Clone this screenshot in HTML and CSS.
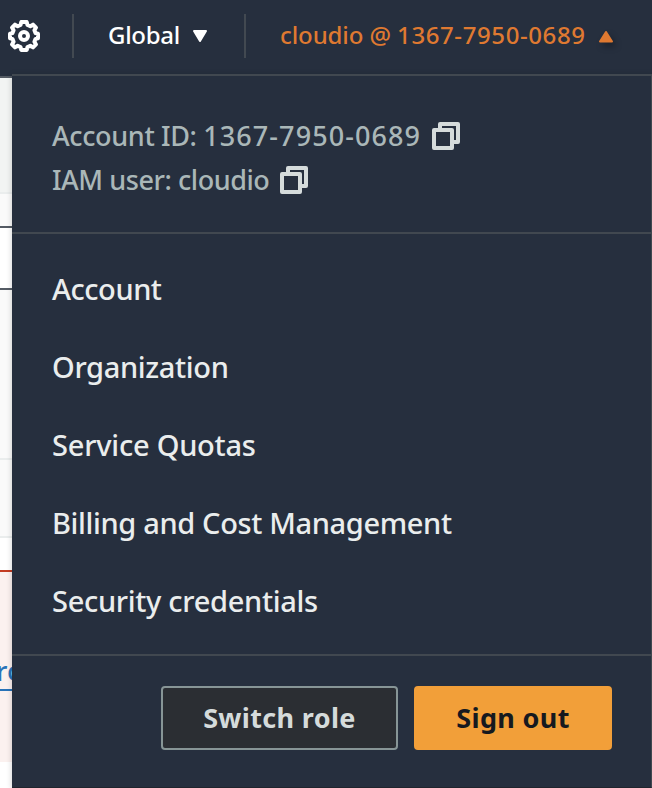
FILE: index.html
```html
<!DOCTYPE html>
<html lang="en">
<head>
<meta charset="utf-8">
<title>Account menu</title>
<link rel="stylesheet" href="styles.css">
</head>
<body>
<header class="topbar">
  <svg class="gear" viewBox="0 0 32 32" aria-hidden="true">
    <path d="M13.300 2h5.400l.8 3 2.800 1.200 2.700-1.600 3 3-1.600 2.700 1.200 2.800 2.400.6v4.600l-2.400.6-1.200 2.800 1.600 2.700-3 3-2.700-1.600-2.800 1.200-.8 3h-5.400l-.8-3-2.800-1.200L7 27.400l-3-3 1.600-2.700-1.200-2.800L2 18.300v-4.600l2.400-.6 1.200-2.800L4 7.600l3-3 2.700 1.600L12.500 5z"/>
    <circle cx="16" cy="16" r="4"/>
  </svg>
  <span class="divider"></span>
  <div class="region"><span class="t-global">Global</span><svg class="caret" viewBox="0 0 16 13"><path d="M2 1h12L8 11z"/></svg></div>
  <span class="divider"></span>
  <div class="user"><span class="t-user">cloudio @ <span class="digits">1367-7950-0689</span></span><svg class="caret caret-up" viewBox="0 0 16 13"><path d="M2 11.500h12L8 2z"/></svg></div>
</header>
<main class="page">
  <div class="band"></div>
  <div class="gap"></div>
  <div class="field"></div>
  <div class="rows"></div>
  <div class="rows rows-short"></div>
  <div class="alert"><span class="link">ro</span></div>
</main>
<section class="menu">
  <div class="identity">
    <div class="id-row"><span class="t-id">Account ID: <span class="digits">1367-7950-0689</span></span><svg class="copy" viewBox="0 0 28 28"><path d="M8 8V2h18v18h-6M2 8h18v18H2z"/></svg></div>
    <div class="id-row"><span class="t-iam">IAM user: cloudio</span><svg class="copy" viewBox="0 0 28 28"><path d="M8 8V2h18v18h-6M2 8h18v18H2z"/></svg></div>
  </div>
  <nav class="links">
    <a class="t-account">Account</a>
    <a class="t-org">Organization</a>
    <a class="t-quotas">Service Quotas</a>
    <a class="t-billing">Billing and Cost Management</a>
    <a class="t-security">Security credentials</a>
  </nav>
  <div class="actions">
    <button class="btn switch">Switch role</button>
    <button class="btn signout">Sign out</button>
  </div>
</section>
</body>
</html>
```
FILE: styles.css
```css
* { box-sizing: border-box; }
body {
  margin: 0;
  width: 652px;
  height: 788px;
  overflow: hidden;
  position: relative;
  background: #fff;
  font-family: "Noto Sans", "Open Sans", sans-serif;
  font-weight: 500;
}
svg { display: block; flex: none; }
span, a { white-space: nowrap; }

.topbar {
  height: 78px;
  padding: 0 0 4px 8px;
  display: flex;
  align-items: center;
  background: #262f3e;
  border-bottom: 2px solid #545b64;
  color: #fff;
  font-size: 24px;
}
.gear { width: 32px; height: 32px; margin-right: 32px; fill: none; stroke: #fff; stroke-width: 4; stroke-linejoin: round; }
.divider { width: 2px; height: 44px; background: #424951; flex: none; }
.region { width: 170px; padding-left: 34px; display: flex; align-items: center; }
.t-global { width: 72px; letter-spacing: -.3px; margin-top: -3px; }
.caret { width: 16px; height: 13px; margin-left: 12px; fill: #fff; stroke: #fff; stroke-width: 2; stroke-linejoin: round; }
.user { padding-left: 34px; display: flex; align-items: center; color: #df7931; }
.t-user { width: 306px; margin-top: -3px; letter-spacing: -.1px; }
.t-user .digits { letter-spacing: .6px; }
.caret-up { fill: #df7931; stroke: #df7931; overflow: visible; filter: drop-shadow(3px 4px 3px rgba(0, 0, 0, .3)); }

.page { width: 32px; }
.band { height: 116px; background: #f2f4f3; border-bottom: 2px solid #eaeded; }
.gap { height: 32px; background: #fafafa; }
.field { height: 64px; border-top: 2px solid #545b64; border-bottom: 2px solid #545b64; }
.rows { height: 170px; background: #fafafa; border-bottom: 2px solid #eaeded; }
.rows-short { height: 78px; }
.alert { margin-top: 32px; height: 192px; padding-top: 82px; border-top: 2px solid #c43c22; background: #fbf1ef; }
.link { display: inline-block; height: 37px; border-bottom: 2px solid #2873b8; color: #2873b8; font-size: 27px; line-height: 34px; margin-left: -4px; }

.menu {
  position: absolute;
  left: 12px;
  top: 74px;
  width: 640px;
  height: 714px;
  background: #262f3e;
  border-top: 2px solid #414850;
  border-right: 1px solid #414850;
  border-bottom: 1px solid #20252d;
  box-shadow: 0 1px 6px rgba(0, 0, 0, .2);
}
.identity { height: 158px; padding: 38px 0 0 40px; border-bottom: 2px solid #414850; color: #aab7b8; font-size: 27px; }
.id-row { height: 44px; display: flex; align-items: center; }
.t-id, .t-iam { margin-top: -2px; }
.t-id { width: 380px; letter-spacing: -.36px; }
.t-id .digits { letter-spacing: 1.080px; }
.t-iam { width: 228px; letter-spacing: -.44px; }
.copy { width: 28px; height: 28px; fill: none; stroke: #d5dbdb; stroke-width: 4; stroke-linejoin: round; }
.links { height: 422px; padding: 16px 40px; border-bottom: 2px solid #414850; display: flex; flex-direction: column; color: #eaeded; font-size: 29px; }
.links a { height: 78px; line-height: 78px; }
.t-account { letter-spacing: -.45px; }
.t-org { letter-spacing: -.33px; }
.t-quotas { letter-spacing: -.22px; }
.t-billing { letter-spacing: -.35px; }
.t-security { letter-spacing: -.3px; }
.actions { padding: 30px 39px 0 0; display: flex; justify-content: flex-end; gap: 16px; }
.btn { height: 64px; padding: 0 0 2px; border: 2px solid #879596; border-radius: 4px; background: #2b2e33; color: #d5dbdb; font: 700 27px "Noto Sans", sans-serif; letter-spacing: .35px; white-space: nowrap; }
.switch { width: 237px; }
.signout { width: 198px; background: #f29f39; border-color: #f29f39; color: #16191f; }
```
